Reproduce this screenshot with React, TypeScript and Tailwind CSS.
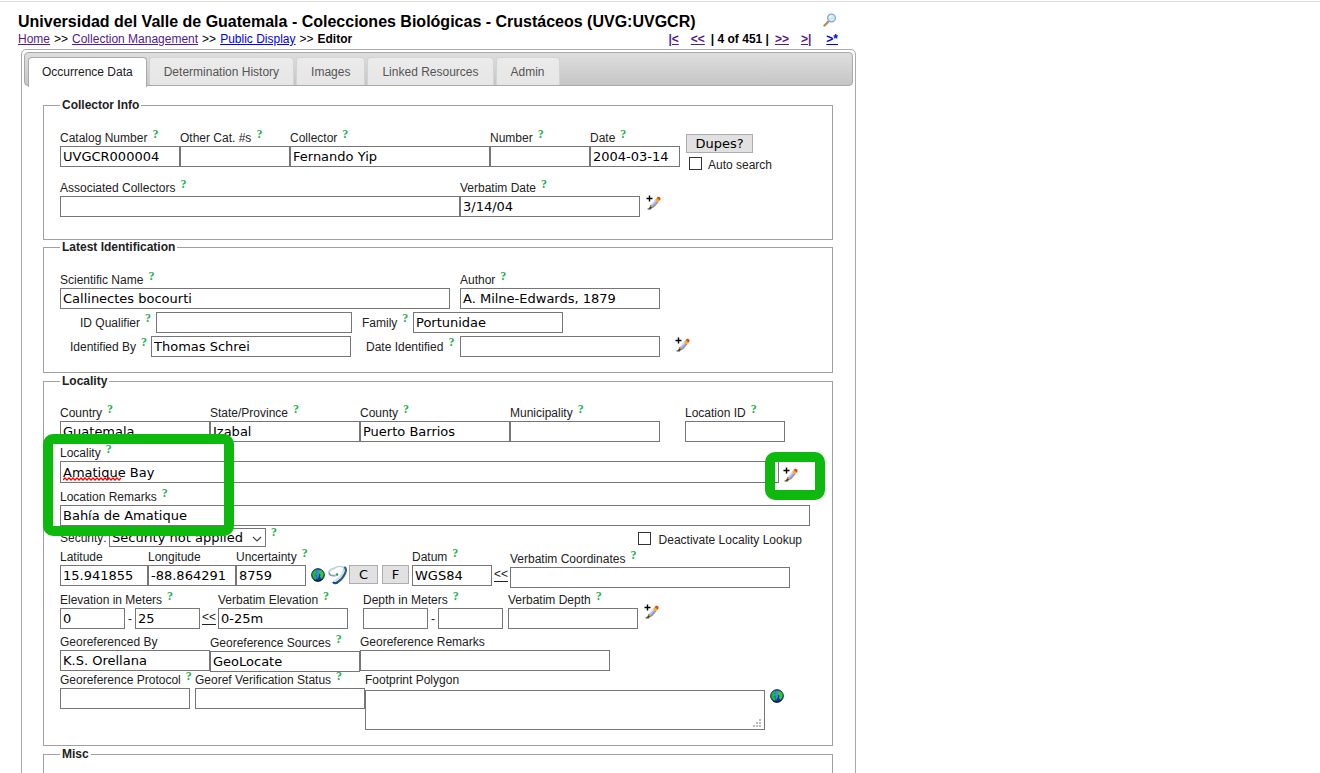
import type { ReactNode } from "react";

const CONTROL = "block rounded-none border border-[#767676] bg-white px-[2px] font-['DejaVu_Sans',sans-serif] text-[13px] leading-[17px] text-black outline-none";
const FIELD = `${CONTROL} h-[21px]`;
const BUTTON = "border border-[#adadad] bg-[#e1e1e1] font-['DejaVu_Sans',sans-serif] text-[13px] leading-[17px] text-black";

function Help() {
  return (
    <a href="#help" aria-label="Help" className="ml-[5px] font-['Liberation_Serif',serif] text-[12px] font-bold leading-[9px] text-[#22b14c]">
      ?
    </a>
  );
}

type FieldProps = {
  id: string;
  label: string;
  width: string;
  value?: string;
  help?: boolean;
  className?: string;
  height?: string;
};

function Field({ id, label, width, value = "", help = true, className = "", height = "h-[21px]" }: FieldProps) {
  return (
    <div className={`shrink-0 ${width} ${className}`}>
      <div className="flex h-4 whitespace-nowrap">
        <label htmlFor={id} className="leading-4">{label}</label>
        {help && <Help />}
      </div>
      <input id={id} defaultValue={value} spellCheck={false} className={`${CONTROL} w-full ${height}`} />
    </div>
  );
}

function InlineField({ id, label, labelWidth, width, value = "" }: { id: string; label: string; labelWidth: string; width: string; value?: string }) {
  return (
    <div className="flex">
      <div className={`flex h-[21px] whitespace-nowrap pt-[2px] ${labelWidth}`}>
        <label htmlFor={id} className="leading-[18px]">{label}</label>
        <Help />
      </div>
      <input id={id} defaultValue={value} spellCheck={false} className={`${FIELD} ${width}`} />
    </div>
  );
}

function Pencil({ label, className = "" }: { label: string; className?: string }) {
  return (
    <button type="button" aria-label={label} className={`h-[15px] w-[15px] shrink-0 ${className}`}>
      <svg viewBox="0 0 15 15" className="h-full w-full">
        <path d="M3.500.5v6M.5 3.500h6" stroke="#000" strokeWidth="1.400" />
        <path d="M4.600 10 9.300 4.600l3 2.600L7.800 12.400z" fill="#b4b8ee" />
        <path d="M7.800 12.400 12.300 7.200l-1-.8-4.700 5.200z" fill="#8b8dbd" />
        <path d="M5.400 9.700 10 4.900" stroke="#e6e8ff" strokeWidth="1" />
        <path d="m9 4.900 2-2.200 3 2.500-2 2.300z" fill="#f3b31d" />
        <path d="m10.600 3.100 1-1.100c1.800-.9 3.500.7 2.800 2.300l-.9 1.200z" fill="#e8431f" />
        <path d="M2 13.800c1.300-.5 1.700-2 2.600-3.800l2.700 2.300c-1.300 1.200-3 1.700-5.300 1.500z" fill="#3a3524" />
        <path d="M4 11.200 5 10l2.600 2.300-1.300.7z" fill="#c9a24a" />
        <path d="M1.500 14h3.500" stroke="#222" strokeWidth=".8" />
      </svg>
    </button>
  );
}

function Globe({ label, className = "" }: { label: string; className?: string }) {
  return (
    <button type="button" aria-label={label} className={`h-[14px] w-[14px] shrink-0 ${className}`}>
      <svg viewBox="0 0 14 14" className="h-full w-full">
        <circle cx="7" cy="7" r="6.300" fill="#1238a0" stroke="#0b2340" />
        <path d="M5.500 1.800c1.500-.5 3-.2 4 .4L8.300 5 7.600 9 6 11 5 6z" fill="#3f86ea" />
        <path d="M1.200 6C1.500 4 3 2.300 4.800 1.700L6 3 4.800 4.500l.8 1.800L4.300 7.500l1.500 2L4.900 12C2.700 11 1.200 9 1.200 6z" fill="#1fb63a" />
        <path d="M7.800 3.500 9.500 1.900c1.700.6 2.900 2.100 3.200 3.900L12.300 8.500 10.500 11 9 8.800 9.500 6.700 7.900 5.500z" fill="#2ccc2e" />
        <path d="M3 12c2.500 1.600 6 1.300 8.300-1" stroke="#071c30" strokeWidth="1" fill="none" />
      </svg>
    </button>
  );
}

function Swirl() {
  return (
    <button type="button" aria-label="GeoLocate" className="ml-[3px] mt-[16px] h-5 w-[19px] shrink-0">
      <svg viewBox="0 0 19 20" className="h-full w-full" fill="none">
        <path d="M7.500 3C3.500 3.800.8 5.800 1 8c.3 2 3.500 2.700 6.500 2.300" stroke="#c2d3e1" strokeWidth="1.800" />
        <path d="M1 7.500c.2 3 3.500 3.800 6.500 3.200" stroke="#7795b5" strokeWidth="1.100" />
        <path d="M6.500 3C9.500 1 14 1 17 3.200" stroke="#bccddc" strokeWidth="1.500" />
        <path d="M16.300 2c2 1.500 2 4 .5 7-1.700 3.500-4.300 6.500-8 8.700" stroke="#2e5c8a" strokeWidth="2.200" />
        <path d="M15.500 3.200c.8 3.800-2.500 9.500-9 13" stroke="#c4d4e2" strokeWidth="1.500" />
        <path d="M5 16.800c1 1.400 2.500 1.800 4.500.7" stroke="#1f4f80" strokeWidth="2.200" />
        <circle cx="9" cy="9.500" r="1.300" fill="#19a04b" />
      </svg>
    </button>
  );
}

function Magnifier() {
  return (
    <svg viewBox="0 0 14 14" className="h-[14px] w-[14px]">
      <path d="M1.500 12.500 5.500 8.500" stroke="#b98a62" strokeWidth="2.400" strokeLinecap="round" />
      <circle cx="8.500" cy="5" r="3.900" fill="#cfe9fb" stroke="#8ea5c2" strokeWidth="1.200" />
      <path d="M6.500 4.500c.4-1.200 1.500-1.700 2.800-1.500" stroke="#fff" strokeWidth="1.100" fill="none" />
    </svg>
  );
}

function Section({ title, children, className = "" }: { title: string; children?: ReactNode; className?: string }) {
  return (
    <fieldset className={`min-w-0 border border-[#a0a0a0] px-4 ${className}`}>
      <legend className="h-[14px] px-[2px] text-[12px] font-bold leading-[14px]">{title}</legend>
      {children}
    </fieldset>
  );
}

function CopyLink({ label, className }: { label: string; className: string }) {
  return (
    <a href="#copy" aria-label={label} className={`w-[14px] shrink-0 leading-4 underline underline-offset-3 ${className}`}>
      &lt;&lt;
    </a>
  );
}

const TABS = ["Determination History", "Images", "Linked Resources", "Admin"];

export default function App() {
  return (
    <div className="h-screen overflow-hidden bg-white font-['Liberation_Sans',Arial,sans-serif] text-[12px] text-[#222]">
      <div className="mt-px h-px bg-[#dcdcdc]" />
      <header className="ml-[18px] max-w-[820px] pt-[10px] text-black">
        <div className="flex h-5 items-center justify-between">
          <h1 className="text-[16px] font-bold leading-5">
            Universidad del Valle de Guatemala - Colecciones Biológicas - Crustáceos (UVG:UVGCR)
          </h1>
          <button type="button" aria-label="Search" className="mr-[1px] pb-1"><Magnifier /></button>
        </div>
        <div className="flex h-[17px] justify-between leading-[14px]">
          <nav aria-label="Breadcrumb" className="flex gap-1">
            <a href="#home" className="text-[#551a8b] underline">Home</a>
            <span>&gt;&gt;</span>
            <a href="#management" className="text-[#551a8b] underline">Collection Management</a>
            <span>&gt;&gt;</span>
            <a href="#display" className="text-[#0000ee] underline">Public Display</a>
            <span>&gt;&gt;</span>
            <b>Editor</b>
          </nav>
          <nav aria-label="Records" className="flex font-bold text-[#551a8b]">
            <a href="#first" className="underline">|&lt;</a>
            <a href="#previous" className="ml-3 underline">&lt;&lt;</a>
            <span className="mx-[6px] text-black">| 4 of 451 |</span>
            <a href="#next" className="underline">&gt;&gt;</a>
            <a href="#last" className="ml-3 underline">&gt;|</a>
            <a href="#new" className="ml-[15px] text-[#0000ee] underline">&gt;*</a>
          </nav>
        </div>
      </header>

      <main className="ml-[21px] max-w-[835px] rounded-t-[5px] border border-[#aaa] pt-[2px]">
        <div role="tablist" className="mx-[2px] flex h-[34px] gap-[2px] rounded-[4px] border border-[#aaa] bg-linear-to-b from-[#dedede] to-[#c6c6c6] pl-[3px] pt-1">
          <button type="button" role="tab" aria-selected="true" className="h-[30px] rounded-t-[4px] border border-b-0 border-[#aaa] bg-white px-[13px] pb-[2px] text-[#212121]">
            Occurrence Data
          </button>
          {TABS.map((tab) => (
            <button key={tab} type="button" role="tab" aria-selected="false" className="h-[28px] rounded-t-[4px] border border-b-0 border-[#d3d3d3] bg-linear-to-b from-[#ebebeb] to-[#e6e6e6] px-[14px] text-[#555]">
              {tab}
            </button>
          ))}
        </div>

        <form className="pl-[21px] pr-[22px] pt-3">
          <Section title="Collector Info" className="pb-[22px]">
            <div className="flex items-start pt-[18px]">
              <Field id="catalog" label="Catalog Number" width="w-[120px]" value="UVGCR000004" />
              <Field id="other" label="Other Cat. #s" width="w-[110px]" />
              <Field id="collector" label="Collector" width="w-[200px]" value="Fernando Yip" />
              <Field id="number" label="Number" width="w-[100px]" />
              <Field id="date" label="Date" width="w-[90px]" value="2004-03-14" />
              <div className="ml-[6px] pt-1">
                <button type="button" className={`${BUTTON} block h-[19px] w-[67px]`}>Dupes?</button>
                <label className="flex h-5 items-center gap-[6px] pl-[3px]">
                  <input type="checkbox" className="h-[13px] w-[13px] appearance-none border border-[#333] bg-white" />
                  <span className="pt-[3px]">Auto search</span>
                </label>
              </div>
            </div>
            <div className="mt-[7px] flex items-start">
              <Field id="associated" label="Associated Collectors" width="w-[400px]" />
              <Field id="verbatim-date" label="Verbatim Date" width="w-[180px]" value="3/14/04" />
              <Pencil label="Edit date details" className="ml-[6px] mt-[15px]" />
            </div>
          </Section>

          <Section title="Latest Identification" className="pb-[15px]">
            <div className="flex items-start gap-[10px] pt-[18px]">
              <Field id="scientific" label="Scientific Name" width="w-[390px]" value="Callinectes bocourti" />
              <Field id="author" label="Author" width="w-[200px]" value="A. Milne-Edwards, 1879" />
            </div>
            <div className="mt-[3px] flex gap-[10px] pl-5">
              <InlineField id="qualifier" label="ID Qualifier" labelWidth="w-[76px]" width="w-[196px]" />
              <InlineField id="family" label="Family" labelWidth="w-[51px]" width="w-[150px]" value="Portunidae" />
            </div>
            <div className="mt-[3px] flex gap-[15px] pl-[10px]">
              <InlineField id="identified-by" label="Identified By" labelWidth="w-[81px]" width="w-[200px]" value="Thomas Schrei" />
              <InlineField id="date-identified" label="Date Identified" labelWidth="w-[94px]" width="w-[200px]" />
              <Pencil label="Edit identification details" className="mt-px" />
            </div>
          </Section>

          <div className="relative mt-px">
            <Section title="Locality" className="pb-[15px]">
              <div className="flex items-start pt-[17px]">
                <Field id="country" label="Country" width="w-[150px]" value="Guatemala" />
                <Field id="state" label="State/Province" width="w-[150px]" value="Izabal" />
                <Field id="county" label="County" width="w-[150px]" value="Puerto Barrios" />
                <Field id="municipality" label="Municipality" width="w-[150px]" />
                <Field id="location-id" label="Location ID" width="w-[100px]" className="ml-[25px]" />
              </div>
              <div className="mt-[3px] flex items-start">
                <div className="relative">
                  <Field id="locality" label="Locality" width="w-[719px]" value="Amatique Bay" height="h-[22px]" />
                  <svg viewBox="0 0 60 4" className="pointer-events-none absolute bottom-[2px] left-[3px] h-1 w-[60px]" aria-hidden="true">
                    <path d="M0 3l2-2 2 2 2-2 2 2 2-2 2 2 2-2 2 2 2-2 2 2 2-2 2 2 2-2 2 2 2-2 2 2 2-2 2 2 2-2 2 2 2-2 2 2 2-2 2 2 2-2 2 2 2-2 2 2 2-2" stroke="#f00" strokeWidth="1.300" fill="none" />
                  </svg>
                </div>
                <Pencil label="Edit locality details" className="ml-1 mt-[22px]" />
              </div>
              <div className="mt-[6px] flex">
                <Field id="remarks" label="Location Remarks" width="w-[750px]" value="Bahía de Amatique" />
              </div>
              <div className="mt-[2px] flex h-[19px]">
                <label htmlFor="security" className="w-[49px] leading-5">Security:</label>
                <div className="relative">
                  <select id="security" className={`${CONTROL} h-[19px] w-[157px] appearance-none`}>
                    <option>Security not applied</option>
                  </select>
                  <svg viewBox="0 0 10 6" className="pointer-events-none absolute right-1 top-2 h-[6px] w-[10px]" aria-hidden="true">
                    <path d="m1 1 4 4 4-4" fill="none" stroke="#444" strokeWidth="1.200" />
                  </svg>
                </div>
                <Help />
                <label className="ml-auto mr-[14px] flex h-[21px] items-center gap-2">
                  <input type="checkbox" className="h-[13px] w-[13px] appearance-none border border-[#333] bg-white" />
                  <span className="pt-[3px]">Deactivate Locality Lookup</span>
                </label>
              </div>
              <div className="mt-[2px] flex items-start">
                <Field id="latitude" label="Latitude" width="w-[88px]" value="15.941855" help={false} />
                <Field id="longitude" label="Longitude" width="w-[88px]" value="-88.864291" help={false} />
                <Field id="uncertainty" label="Uncertainty" width="w-[70px]" value="8759" />
                <Globe label="Open map" className="ml-[5px] mt-[19px]" />
                <Swirl />
                <button type="button" className={`${BUTTON} ml-[2px] mt-4 h-[19px] w-[29px]`}>C</button>
                <button type="button" className={`${BUTTON} ml-1 mt-4 h-[19px] w-[27px]`}>F</button>
                <Field id="datum" label="Datum" width="w-[80px]" value="WGS84" className="ml-[3px]" />
                <CopyLink label="Parse coordinates" className="mx-[2px] mt-[17px]" />
                <Field id="verbatim-coordinates" label="Verbatim Coordinates" width="w-[280px]" className="mt-[2px]" />
              </div>
              <div className="mt-1 flex items-end">
                <Field id="elevation-min" label="Elevation in Meters" width="w-[65px]" value="0" />
                <span className="w-[10px] text-center leading-5">-</span>
                <input aria-label="Maximum elevation in meters" defaultValue="25" className={`${FIELD} w-[65px]`} />
                <CopyLink label="Parse elevation" className="mx-[2px] mb-1" />
                <Field id="verbatim-elevation" label="Verbatim Elevation" width="w-[130px]" value="0-25m" />
                <Field id="depth-min" label="Depth in Meters" width="w-[65px]" className="ml-[15px]" />
                <span className="w-[10px] text-center leading-5">-</span>
                <input aria-label="Maximum depth in meters" className={`${FIELD} mr-[5px] w-[65px]`} />
                <Field id="verbatim-depth" label="Verbatim Depth" width="w-[130px]" />
                <Pencil label="Edit elevation details" className="mb-[10px] ml-[6px]" />
              </div>
              <div className="mt-[5px] flex items-start">
                <Field id="georeferenced-by" label="Georeferenced By" width="w-[150px]" value="K.S. Orellana" help={false} />
                <Field id="sources" label="Georeference Sources" width="w-[150px]" value="GeoLocate" className="mt-px" />
                <Field id="georeference-remarks" label="Georeference Remarks" width="w-[250px]" help={false} />
              </div>
              <div className="flex items-start">
                <Field id="protocol" label="Georeference Protocol" width="w-[130px]" className="mr-[5px]" />
                <Field id="verification" label="Georef Verification Status" width="w-[170px]" />
                <div className="w-[400px]">
                  <label htmlFor="footprint" className="block h-[18px] leading-4">Footprint Polygon</label>
                  <div className="relative">
                    <textarea id="footprint" className={`${CONTROL} h-10 w-full resize-none`} />
                    <svg viewBox="0 0 8 8" className="pointer-events-none absolute bottom-[3px] right-1 h-2 w-2" fill="#bbb" aria-hidden="true">
                      <path d="M6 0h2v2H6zM3 3h2v2H3zM6 3h2v2H6zM0 6h2v2H0zM3 6h2v2H3zM6 6h2v2H6z" />
                    </svg>
                  </div>
                </div>
                <Globe label="Open footprint map" className="ml-[5px] mt-[17px]" />
              </div>
            </Section>
            <div className="pointer-events-none absolute left-0 top-[60px] h-[102px] w-[191px] rounded-[10px] border-10 border-[#0cb90c]" />
            <div className="pointer-events-none absolute left-[722px] top-[78px] h-[48px] w-[60px] rounded-[10px] border-10 border-[#0cb90c]" />
          </div>

          <Section title="Misc" className="mt-px h-[200px]" />
        </form>
      </main>
    </div>
  );
}
